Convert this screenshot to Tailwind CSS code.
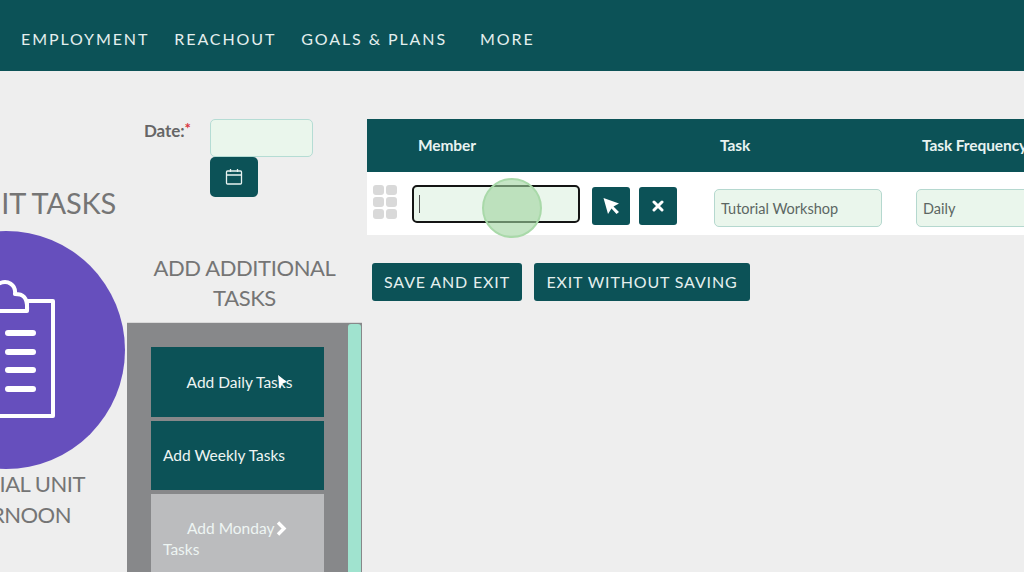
<!DOCTYPE html>
<html lang="en">
<head>
  <meta charset="UTF-8">
  <title>Edit Tasks</title>
  <script src="https://cdn.jsdelivr.net/npm/@tailwindcss/browser@4"></script>
</head>
<body class="h-[572px] overflow-hidden bg-[#eeeeee] font-['Lato',sans-serif] text-[#6b6b6b]">

<!-- Top nav -->
<nav class="h-[71px] bg-[#0c5257] flex items-center pl-[21px] pt-[7px] text-[16px] tracking-[1.9px] text-[#e4efee]">
  <span>EMPLOYMENT</span>
  <span class="ml-[25px]">REACHOUT</span>
  <span class="ml-[25px]">GOALS &amp; PLANS</span>
  <span class="ml-[33px]">MORE</span>
</nav>

<div class="flex h-[501px] overflow-hidden">
  <!-- Left column, cut off by the window -->
  <div class="w-[127px] shrink-0 overflow-hidden flex flex-col items-end">
    <div class="mt-[114px] pr-[11px] text-[29px] leading-[36px] text-[#757575] whitespace-nowrap tracking-[-0.2px]">IT TASKS</div>
    <div class="relative mt-[10px] w-[127px] h-[238px] shrink-0">
      <div class="absolute left-[-113px] top-0 w-[238px] h-[238px] rounded-full bg-[#664fbd]"></div>
      <svg class="absolute left-0 top-[48px]" width="60" height="142" viewBox="0 0 60 142" fill="none" stroke="#fff" stroke-width="4">
        <path d="M-2 32H27V22H53V137H-2" stroke-linejoin="round"/>
        <path d="M-2 5C8 0 16 6 15 15C22 15 28 17 27 32" stroke-linejoin="round"/>
        <g stroke-width="6" stroke-linecap="round">
          <path d="M8 54H33"/>
          <path d="M8 73H33"/>
          <path d="M8 91H33"/>
          <path d="M8 110H33"/>
        </g>
      </svg>
    </div>
    <div class="mt-[-1px] w-[85px] self-start text-[22px] leading-[31px] tracking-[-0.5px] text-[#757575] whitespace-nowrap flex flex-col items-end">
      <span>NIAL UNIT</span>
      <span class="mr-[14px]">RNOON</span>
    </div>
  </div>

  <!-- Middle column -->
  <div class="w-[235px] shrink-0 flex flex-col">
    <div class="flex mt-[48px] h-[78px]">
      <div class="ml-[17px] w-[66px] mt-[2px] text-[17px] leading-[20px] font-bold text-[#666] tracking-[-0.1px]">Date:<span class="text-[#d9343f] text-[15px] leading-none align-[3px]">*</span></div>
      <div>
        <div class="w-[103px] h-[38px] rounded-[5px] border border-[#b5dcd4] bg-[#eaf6ec]"></div>
        <div class="w-[48px] h-[40px] rounded-[5px] bg-[#0c5257] flex items-center justify-center">
          <svg width="18" height="18" viewBox="0 0 18 18" fill="none" stroke="#e8f3f1" stroke-width="1.3">
            <rect x="1.5" y="3" width="15" height="13" rx="1"/>
            <path d="M1.5 7H16.5M5.5 1V4M12.5 1V4"/>
          </svg>
        </div>
      </div>
    </div>
    <div class="mt-[56px] ml-[2px] w-[231px] text-center text-[22px] leading-[30px] tracking-[-0.4px] text-[#757575]">ADD ADDITIONAL<br>TASKS</div>
    <div class="mt-[9px] flex-1 bg-[#87888a] relative pt-[24px] pl-[24px] border-t border-[#d9d9d9]">
      <div class="absolute right-[1px] top-[1px] bottom-0 w-[13px] rounded-t-[3px] bg-[#a0e3cf]"></div>
      <div class="w-[173px] flex flex-col gap-[4px] text-[15.5px] text-[#eef5f3]">
        <div class="h-[70px] bg-[#0c5257] flex items-center justify-center pl-[4px] pt-[1px]">Add Daily Tasks</div>
        <div class="h-[69px] bg-[#0c5257] flex items-center pl-[12px]">Add Weekly Tasks</div>
        <div class="h-[90px] bg-[#bbbcbe] pl-[12px] pt-[24px] leading-[21px]">
          <div class="flex items-center pl-[24px]">Add Monday
            <svg class="ml-[2px]" width="11" height="15" viewBox="0 0 11 15" fill="none" stroke="#fff" stroke-width="3.4"><path d="M2 1.5L8 7.5L2 13.5"/></svg>
          </div>
          <div>Tasks</div>
        </div>
      </div>
    </div>
  </div>

  <!-- Right column -->
  <div class="flex-1 min-w-0 ml-[5px] pt-[48px]">
    <div class="w-[800px]">
      <div class="h-[53px] bg-[#0c5257] flex items-center text-[15.5px] tracking-[-0.1px] font-bold text-[#e8f3f1]">
        <span class="ml-[51px] w-[302px]">Member</span>
        <span class="w-[202px]">Task</span>
        <span>Task Frequency</span>
      </div>
      <div class="h-[63px] bg-white flex items-start">
        <div class="ml-[6px] mt-[13px] grid grid-cols-2 gap-[2px] w-[24px]">
          <i class="h-[10px] rounded-[3px] bg-[#d9d9d9]"></i><i class="h-[10px] rounded-[3px] bg-[#d9d9d9]"></i>
          <i class="h-[10px] rounded-[3px] bg-[#d9d9d9]"></i><i class="h-[10px] rounded-[3px] bg-[#d9d9d9]"></i>
          <i class="h-[10px] rounded-[3px] bg-[#d9d9d9]"></i><i class="h-[10px] rounded-[3px] bg-[#d9d9d9]"></i>
        </div>
        <div class="ml-[15px] mt-[13px] w-[168px] h-[38px] rounded-[5px] border-2 border-[#141414] bg-[#eaf6ec] flex items-center pl-[5px]">
          <div class="w-[1px] h-[18px] bg-[#555]"></div>
        </div>
        <div class="ml-[12px] mt-[15px] w-[38px] h-[38px] rounded-[3px] bg-[#0c5257] flex items-center justify-center">
          <svg width="18" height="18" viewBox="0 0 18 18" fill="#fff"><path d="M1.5 1L17 6.5L11.5 9.5L17 15L14.5 17L9.5 11.5L6 17Z"/></svg>
        </div>
        <div class="ml-[9px] mt-[15px] w-[38px] h-[38px] rounded-[3px] bg-[#0c5257] flex items-center justify-center">
          <svg width="12" height="12" viewBox="0 0 12 12" fill="none" stroke="#fff" stroke-width="3" stroke-linecap="round"><path d="M2 2L10 10M10 2L2 10"/></svg>
        </div>
        <div class="ml-[37px] mt-[17px] w-[168px] h-[38px] rounded-[5px] border border-[#b5d8cf] bg-[#eaf6ec] flex items-center pl-[6px] pt-[1px] text-[14.5px] text-[#5c6663]">Tutorial Workshop</div>
        <div class="ml-[34px] mt-[17px] w-[168px] h-[38px] rounded-[5px] border border-[#b5d8cf] bg-[#eaf6ec] flex items-center pl-[6px] pt-[1px] text-[14.5px] text-[#5c6663]">Daily</div>
      </div>
    </div>
    <div class="flex gap-[12px] mt-[28px] ml-[5px] text-[16px] tracking-[0.85px] text-[#e4efee]">
      <div class="w-[150px] h-[38px] rounded-[3px] bg-[#0c5257] flex items-center justify-center">SAVE AND EXIT</div>
      <div class="w-[216px] h-[38px] rounded-[3px] bg-[#0c5257] flex items-center justify-center">EXIT WITHOUT SAVING</div>
    </div>
  </div>
</div>

<!-- Tutorial highlight and pointer, sitting over the page -->
<div class="absolute left-[482px] top-[178px] w-[60px] h-[60px] rounded-full bg-[#9fd49f]/60 border-2 border-[#a9d9a9]"></div>
<svg class="absolute left-[277px] top-[374px]" width="12" height="16" viewBox="0 0 12 16" fill="#fff"><path d="M1 1L10 8L5.5 9.5L3 15Z"/></svg>
</body>
</html>
